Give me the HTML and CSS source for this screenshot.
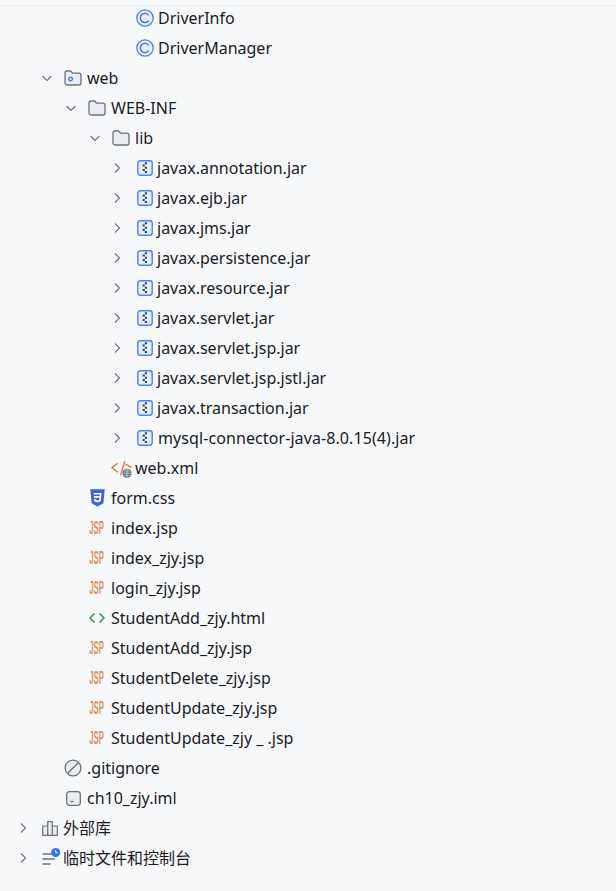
FILE: index.html
```html
<!DOCTYPE html>
<html lang="zh">
<head>
<meta charset="utf-8">
<title>Project tree</title>
<link rel="stylesheet" href="styles.css">
</head>
<body>
<svg class="defs" width="0" height="0" aria-hidden="true">
  <symbol id="chev-r" viewBox="0 0 12 12"><path d="M4 1.500 8.500 6 4 10.500" fill="none" stroke="#6c707e" stroke-width="1.100"/></symbol>
  <symbol id="chev-d" viewBox="0 0 12 12"><path d="M1.500 4 6 8.500 10.500 4" fill="none" stroke="#6c707e" stroke-width="1.100"/></symbol>
  <symbol id="class" viewBox="0 0 18 18"><circle cx="9" cy="9" r="8.200" fill="#e7effd" stroke="#4682fa" stroke-width="1.300"/><path d="M12.700 6.300A4.600 4.600 0 1 0 12.700 11.700" fill="none" stroke="#3c70d8" stroke-width="1.400"/></symbol>
  <symbol id="folder" viewBox="0 0 18 16"><path d="M1 3a2 2 0 0 1 2-2h3.600l2 2.200H15a2 2 0 0 1 2 2V13a2 2 0 0 1-2 2H3a2 2 0 0 1-2-2Z" fill="#ebecf0" stroke="#6c707e" stroke-width="1.300"/></symbol>
  <symbol id="module" viewBox="0 0 18 16"><path d="M1 3a2 2 0 0 1 2-2h3.600l2 2.200H15a2 2 0 0 1 2 2V13a2 2 0 0 1-2 2H3a2 2 0 0 1-2-2Z" fill="#ebecf0" stroke="#6c707e" stroke-width="1.300"/><circle cx="6.600" cy="9" r="1.800" fill="#e7effd" stroke="#3574f0" stroke-width="1.300"/></symbol>
  <symbol id="jar" viewBox="0 0 16 16"><rect x=".8" y=".8" width="14.400" height="14.400" rx="2.400" fill="#e7effd" stroke="#4682fa" stroke-width="1.400"/><path d="M7.800 3.300h2.200M5.600 5.500h2.200M7.800 7.700h2.200M5.600 9.900h2.200M7.800 12.100h2.200" stroke="#2f4a78" stroke-width="2"/></symbol>
  <symbol id="xml" viewBox="0 0 22 20">
    <path d="M6.800 5.300 1 9.700 6.800 14.300" fill="none" stroke="#e4753a" stroke-width="1.400"/>
    <line x1="13.800" y1="3.200" x2="9.600" y2="17.200" stroke="#e4753a" stroke-width="1.400"/>
    <path d="M14.500 6 20.500 9.700" fill="none" stroke="#e4753a" stroke-width="1.400"/>
    <circle cx="16" cy="15.300" r="4.600" fill="#6c707e"/>
    <path d="M11.400 15.300h9.200M16 10.700v9.200M13 13h6M13 17.600h6" stroke="#f7f8fa" stroke-width=".5"/>
  </symbol>
  <symbol id="css" viewBox="0 0 15 18"><path d="M.3.300h14.400l-1.300 14L7.500 17.500l-5.900-3.200Z" fill="#3c63d8"/><path d="M3.500 4h8l-.7 8.300-3.300 1.200-3.300-1.200-.2-2.300h1.800l.1 1 1.600.5 1.700-.5.200-2.300H4l-.1-1.700h5.800l.1-1.600H3.600Z" fill="#fff"/></symbol>
  <symbol id="html" viewBox="0 0 18 12"><path d="M6.500 1.500 2 6l4.500 4.500M11.500 1.500 16 6l-4.500 4.500" fill="none" stroke="#369650" stroke-width="1.500"/></symbol>
  <symbol id="ignore" viewBox="0 0 18 18"><circle cx="9" cy="9" r="7.900" fill="#ebecf0" stroke="#6c707e" stroke-width="1.300"/><path d="M3.700 14.300 14.300 3.700" stroke="#6c707e" stroke-width="1.300"/></symbol>
  <symbol id="iml" viewBox="0 0 15 15"><rect x=".7" y=".7" width="13.600" height="13.600" rx="2.500" fill="#ebecf0" stroke="#6c707e" stroke-width="1.300"/><path d="M4.500 10.500h3" stroke="#6c707e" stroke-width="1.200"/></symbol>
  <symbol id="lib" viewBox="0 0 16 15"><path d="M.7 5h5v9.300h-5ZM5.700.7h4.600v13.600H5.700ZM10.300 5h5v9.300h-5Z" fill="#ebecf0" stroke="#6c707e" stroke-width="1.200"/></symbol>
  <symbol id="scratch" viewBox="0 0 20 20"><path d="M1.500 6h10M1.500 11h12.500M1.500 16h8" stroke="#6c707e" stroke-width="1.300"/><circle cx="14.700" cy="4.500" r="4.500" fill="#3574f0"/><path d="M14.700 2v2.700h2" fill="none" stroke="#fff" stroke-width="1"/></symbol>
</svg>

<main class="tree">
  <div class="row lv4"><span class="chev"></span><svg class="ico ico-class"><use href="#class"/></svg><span class="name">DriverInfo</span></div>
  <div class="row lv4"><span class="chev"></span><svg class="ico ico-class"><use href="#class"/></svg><span class="name">DriverManager</span></div>
  <div class="row lv1"><svg class="chev"><use href="#chev-d"/></svg><svg class="ico ico-folder"><use href="#module"/></svg><span class="name">web</span></div>
  <div class="row lv2"><svg class="chev"><use href="#chev-d"/></svg><svg class="ico ico-folder"><use href="#folder"/></svg><span class="name">WEB-INF</span></div>
  <div class="row lv3"><svg class="chev"><use href="#chev-d"/></svg><svg class="ico ico-folder"><use href="#folder"/></svg><span class="name">lib</span></div>
  <div class="row lv4"><svg class="chev"><use href="#chev-r"/></svg><svg class="ico ico-jar"><use href="#jar"/></svg><span class="name">javax.annotation.jar</span></div>
  <div class="row lv4"><svg class="chev"><use href="#chev-r"/></svg><svg class="ico ico-jar"><use href="#jar"/></svg><span class="name">javax.ejb.jar</span></div>
  <div class="row lv4"><svg class="chev"><use href="#chev-r"/></svg><svg class="ico ico-jar"><use href="#jar"/></svg><span class="name">javax.jms.jar</span></div>
  <div class="row lv4"><svg class="chev"><use href="#chev-r"/></svg><svg class="ico ico-jar"><use href="#jar"/></svg><span class="name">javax.persistence.jar</span></div>
  <div class="row lv4"><svg class="chev"><use href="#chev-r"/></svg><svg class="ico ico-jar"><use href="#jar"/></svg><span class="name">javax.resource.jar</span></div>
  <div class="row lv4"><svg class="chev"><use href="#chev-r"/></svg><svg class="ico ico-jar"><use href="#jar"/></svg><span class="name">javax.servlet.jar</span></div>
  <div class="row lv4"><svg class="chev"><use href="#chev-r"/></svg><svg class="ico ico-jar"><use href="#jar"/></svg><span class="name">javax.servlet.jsp.jar</span></div>
  <div class="row lv4"><svg class="chev"><use href="#chev-r"/></svg><svg class="ico ico-jar"><use href="#jar"/></svg><span class="name">javax.servlet.jsp.jstl.jar</span></div>
  <div class="row lv4"><svg class="chev"><use href="#chev-r"/></svg><svg class="ico ico-jar"><use href="#jar"/></svg><span class="name">javax.transaction.jar</span></div>
  <div class="row lv4"><svg class="chev"><use href="#chev-r"/></svg><svg class="ico ico-jar"><use href="#jar"/></svg><span class="name name-wide">mysql-connector-java-8.0.15(4).jar</span></div>
  <div class="row lv3"><span class="chev"></span><svg class="ico ico-xml"><use href="#xml"/></svg><span class="name">web.xml</span></div>
  <div class="row lv2"><span class="chev"></span><svg class="ico ico-css"><use href="#css"/></svg><span class="name">form.css</span></div>
  <div class="row lv2"><span class="chev"></span><span class="ico jsp">JSP</span><span class="name">index.jsp</span></div>
  <div class="row lv2"><span class="chev"></span><span class="ico jsp">JSP</span><span class="name">index_zjy.jsp</span></div>
  <div class="row lv2"><span class="chev"></span><span class="ico jsp">JSP</span><span class="name">login_zjy.jsp</span></div>
  <div class="row lv2"><span class="chev"></span><svg class="ico ico-html"><use href="#html"/></svg><span class="name">StudentAdd_zjy.html</span></div>
  <div class="row lv2"><span class="chev"></span><span class="ico jsp">JSP</span><span class="name">StudentAdd_zjy.jsp</span></div>
  <div class="row lv2"><span class="chev"></span><span class="ico jsp">JSP</span><span class="name">StudentDelete_zjy.jsp</span></div>
  <div class="row lv2"><span class="chev"></span><span class="ico jsp">JSP</span><span class="name">StudentUpdate_zjy.jsp</span></div>
  <div class="row lv2"><span class="chev"></span><span class="ico jsp">JSP</span><span class="name">StudentUpdate_zjy _ .jsp</span></div>
  <div class="row lv1"><span class="chev"></span><svg class="ico ico-ignore"><use href="#ignore"/></svg><span class="name">.gitignore</span></div>
  <div class="row lv1"><span class="chev"></span><svg class="ico ico-iml"><use href="#iml"/></svg><span class="name">ch10_zjy.iml</span></div>
  <div class="row lv0"><svg class="chev"><use href="#chev-r"/></svg><svg class="ico ico-lib"><use href="#lib"/></svg><span class="name name-cjk">外部库</span></div>
  <div class="row lv0"><svg class="chev"><use href="#chev-r"/></svg><svg class="ico ico-scratch"><use href="#scratch"/></svg><span class="name name-cjk">临时文件和控制台</span></div>
</main>
</body>
</html>
```
FILE: styles.css
```css
* { box-sizing: border-box; }
html, body { margin: 0; height: 100%; }
body {
  background: #f7f8fa;
  color: #1a1b1e;
  font-family: "Noto Sans", "Noto Sans CJK SC", sans-serif;
  font-size: 16px;
  overflow: hidden;
}
.defs { display: block; height: 0; }
.tree { padding-top: 3px; }
.tree::before {
  content: "";
  display: block;
  height: 1px;
  margin-top: 2px;
  margin-bottom: -3px;
  background: #ebecf0;
}
.row {
  display: flex;
  align-items: center;
  height: 30px;
}
.lv0 { padding-left: 17px; }
.lv1 { padding-left: 41px; }
.lv2 { padding-left: 65px; }
.lv3 { padding-left: 89px; }
.lv4 { padding-left: 111px; }
.chev {
  flex: none;
  width: 12px;
  height: 12px;
  margin-right: 7px;
}
.ico { flex: none; }
.ico-class { width: 18px; height: 18px; margin-left: 6px; margin-right: 4px; }
.ico-folder { width: 18px; height: 16px; margin-left: 4px; margin-right: 5px; }
.ico-jar { width: 16px; height: 16px; margin-left: 7px; margin-right: 4px; }
.ico-xml { width: 22px; height: 20px; margin-left: 2.5px; margin-right: 2.5px; }
.ico-css { width: 15px; height: 18px; margin-left: 6px; margin-right: 6px; }
.ico-html { width: 18px; height: 12px; margin-left: 4px; margin-right: 5px; }
.ico-ignore { width: 18px; height: 18px; margin-left: 4px; margin-right: 5px; }
.ico-iml { width: 15px; height: 15px; margin-left: 6px; margin-right: 6px; }
.ico-lib { width: 16px; height: 15px; margin-left: 6px; margin-right: 5px; }
.ico-scratch { width: 20px; height: 20px; margin-left: 5px; margin-right: 2px; }
.jsp {
  display: flex;
  justify-content: center;
  width: 15px;
  margin-left: 5px;
  margin-right: 7px;
  color: #e0915f;
  font-family: "Liberation Sans", sans-serif;
  font-size: 17.5px;
  font-weight: 700;
  line-height: 16px;
  white-space: nowrap;
  transform: scaleX(.445);
}
.name { white-space: nowrap; }
.name-wide { margin-left: 1px; letter-spacing: .09px; }
.name-cjk { padding-bottom: 2px; }
```
